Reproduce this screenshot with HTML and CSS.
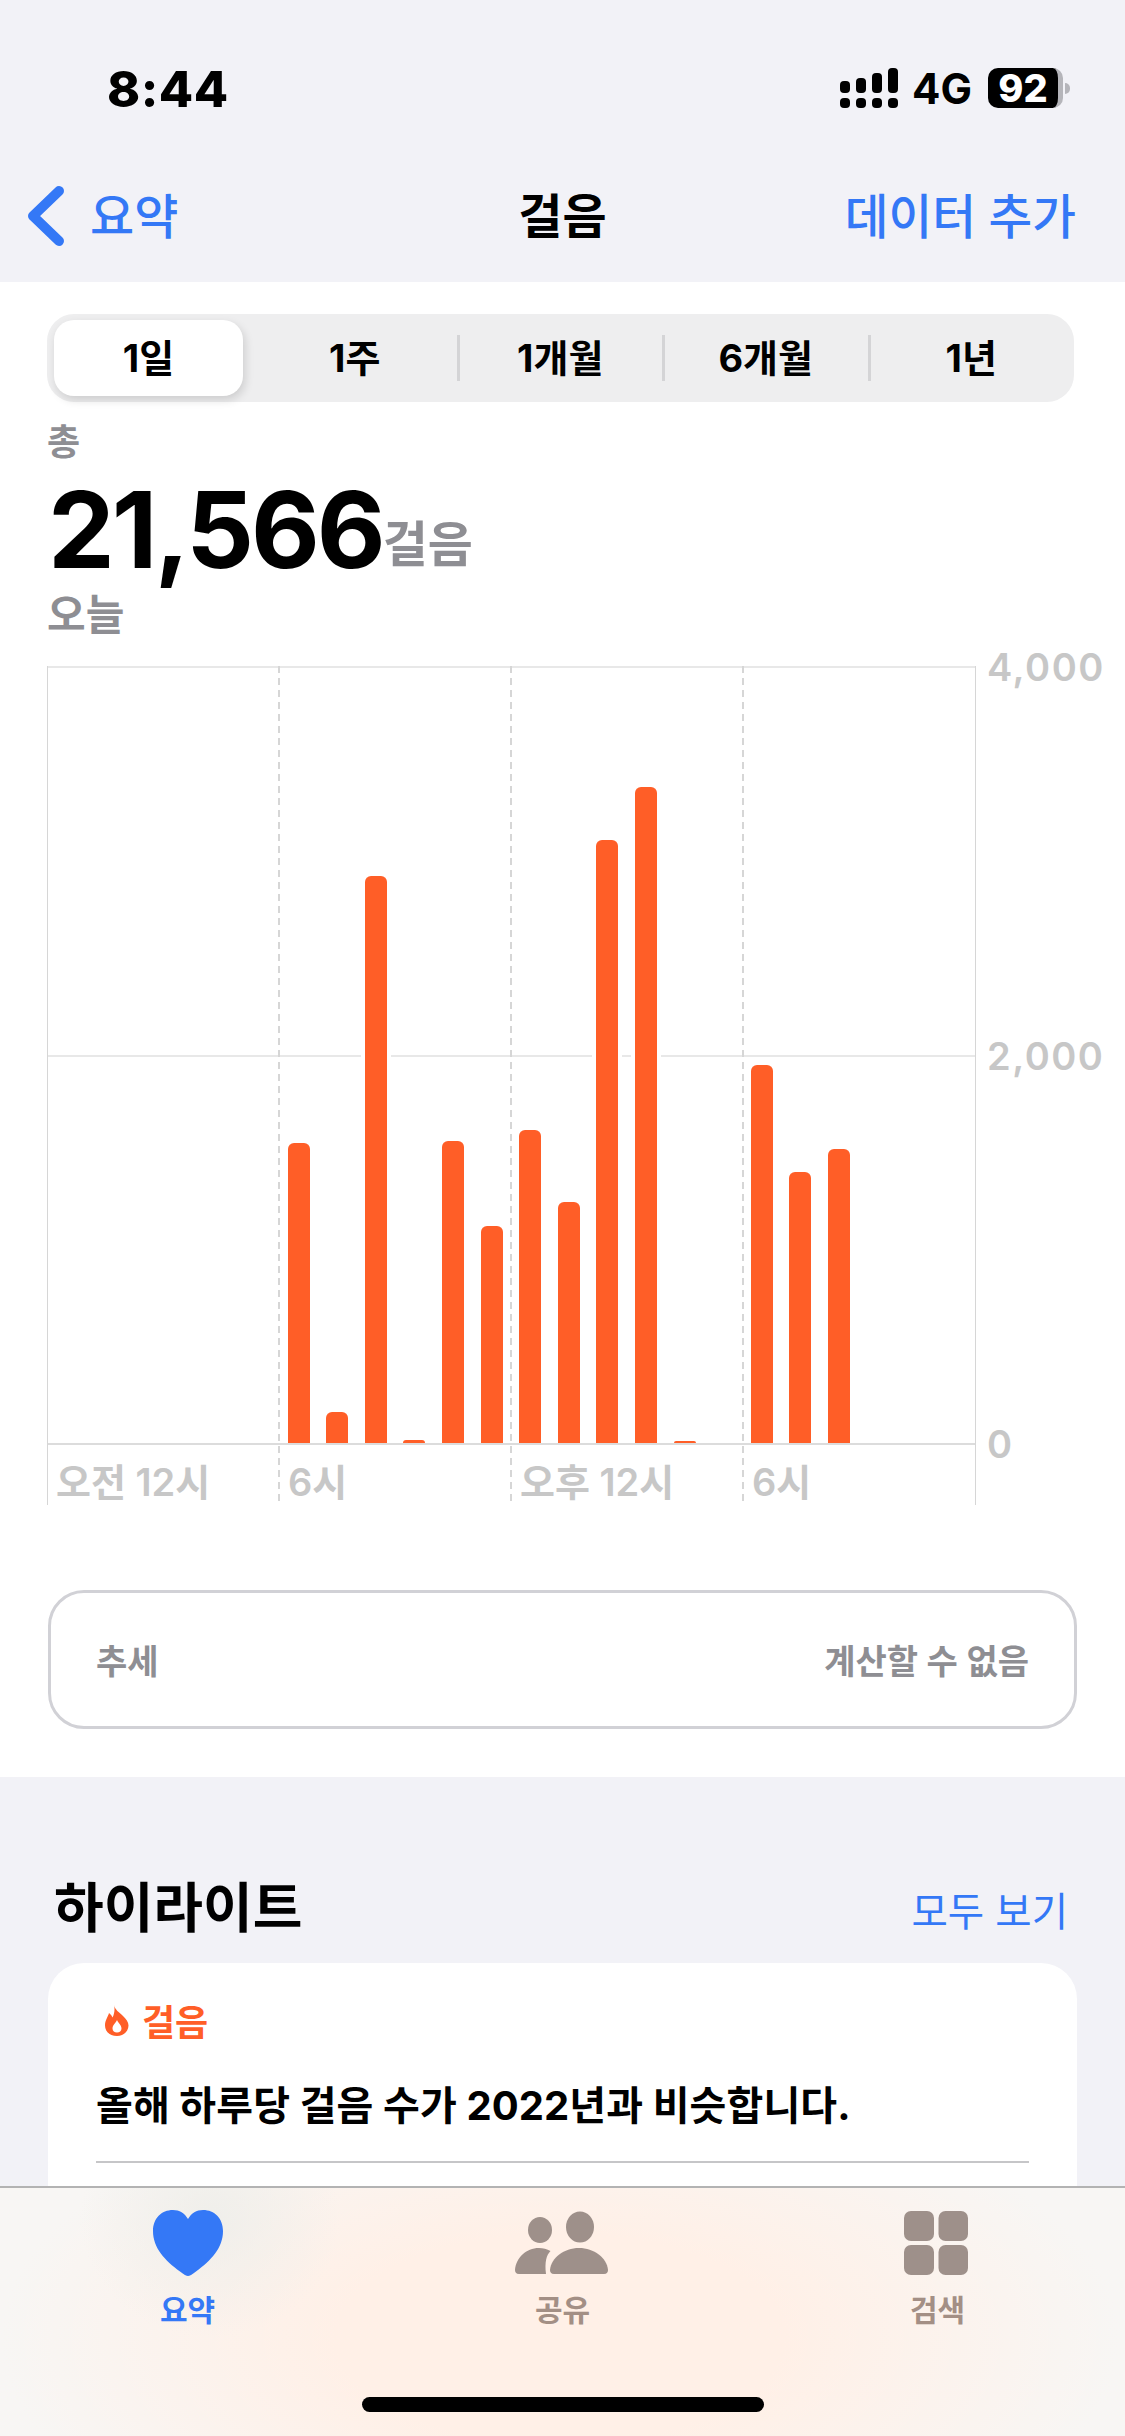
FILE: index.html
```html
<!DOCTYPE html>
<html lang="ko">
  <head>
    <meta charset="UTF-8" />
    <meta name="viewport" content="width=device-width, initial-scale=1.0" />
    <title>걸음</title>
    <link rel="stylesheet" href="styles.css">
  </head>
  <body>
    <header class="topBar">
      <div class="status">
        <span class="time">8:44</span>
        <div class="statusIcons">
          <svg class="signal" width="58" height="40" viewBox="0 0 58 40">
            <rect x="0" y="30" width="10" height="10" rx="4" />
            <rect x="16" y="30" width="10" height="10" rx="4" />
            <rect x="32" y="30" width="10" height="10" rx="4" />
            <rect x="48" y="30" width="10" height="10" rx="4" />
            <rect x="0" y="13" width="10" height="12" rx="4" />
            <rect x="16" y="10" width="10" height="15" rx="4" />
            <rect x="32" y="5" width="10" height="20" rx="4" />
            <rect x="48" y="0" width="10" height="25" rx="4" />
          </svg>
          <span class="network">4G</span>
          <div class="battery">
            <span class="batteryBody">92</span>
            <span class="batteryNub"></span>
          </div>
        </div>
      </div>
      <nav class="navRow">
        <a class="back">
          <svg width="40" height="62" viewBox="0 0 40 62">
            <path d="M33 6 L7 31 L33 56" fill="none" stroke="#3478f6" stroke-width="10" stroke-linecap="round" stroke-linejoin="round" />
          </svg>
          요약
        </a>
        <h1>걸음</h1>
        <a class="addData">데이터 추가</a>
      </nav>
    </header>

    <section class="stepsPanel">
      <div class="segments">
        <button class="selected">1일</button>
        <button>1주</button>
        <button class="divided">1개월</button>
        <button class="divided">6개월</button>
        <button class="divided">1년</button>
      </div>

      <p class="totalLabel">총</p>
      <p class="totalRow"><span class="totalNumber">21,566</span><span class="totalUnit">걸음</span></p>
      <p class="dayLabel">오늘</p>

      <div class="chart">
        <div class="plot">
          <div class="rules">
            <span></span>
            <span></span>
            <span></span>
          </div>
          <div class="dashes">
            <span></span>
            <span></span>
            <span></span>
            <span></span>
          </div>
          <div class="bars">
            <i></i><i></i><i></i><i></i><i></i><i></i>
            <i style="height: 300px"></i>
            <i style="height: 31px"></i>
            <i style="height: 567px"></i>
            <i style="height: 3px"></i>
            <i style="height: 302px"></i>
            <i style="height: 217px"></i>
            <i style="height: 313px"></i>
            <i style="height: 241px"></i>
            <i style="height: 603px"></i>
            <i style="height: 656px"></i>
            <i style="height: 2px"></i>
            <i></i>
            <i style="height: 378px"></i>
            <i style="height: 271px"></i>
            <i style="height: 294px"></i>
            <i></i><i></i><i></i>
          </div>
          <div class="baseline"></div>
          <div class="hours">
            <span>오전 12시</span>
            <span>6시</span>
            <span>오후 12시</span>
            <span>6시</span>
          </div>
        </div>
        <div class="axis">
          <span>4,000</span>
          <span>2,000</span>
          <span>0</span>
        </div>
      </div>

      <div class="trend">
        <span>추세</span>
        <span>계산할 수 없음</span>
      </div>
    </section>

    <section class="highlights">
      <div class="sectionHead">
        <h2>하이라이트</h2>
        <a>모두 보기</a>
      </div>
      <article class="highlightCard">
        <div class="cardTitle">
          <svg width="24" height="31" viewBox="0 0 24 31">
            <path d="M9 0 C10 5 14 7 18 11 C21 14 23.5 17 23.5 20.5 C23.5 26.5 18 31 12 31 C5 31 0 26.5 0 20.5 C0 15 3 12 4 8 C6 9.5 7 11 7.5 12.5 C9.5 9 10 4 9 0 Z" fill="#ff5e27" />
            <path d="M12 15 C13 18 16.5 20 16.5 23.5 C16.5 26 14.5 27.5 12 27.5 C9.5 27.5 7.5 26 7.5 23.5 C7.5 20 11 18 12 15 Z" fill="#fff" />
          </svg>
          걸음
        </div>
        <p class="cardText">올해 하루당 걸음 수가 2022년과 비슷합니다.</p>
        <hr />
      </article>
    </section>

    <footer class="tabBar">
      <div class="tabs">
        <a class="tab active">
          <svg width="70" height="66" viewBox="0 0 70 66">
            <path d="M35 66 C33.5 66 31 64.5 27 61.5 C12 50.5 0 38 0 21 C0 8.5 8.5 0 20 0 C26.5 0 31.5 3 35 9 C38.5 3 43.5 0 50 0 C61.5 0 70 8.5 70 21 C70 38 58 50.5 43 61.5 C39 64.5 36.5 66 35 66 Z" />
          </svg>
          요약
        </a>
        <a class="tab">
          <svg class="peopleIcon" width="94" height="62" viewBox="0 0 94 62">
            <ellipse cx="25" cy="18" rx="12" ry="13" />
            <ellipse cx="65" cy="15" rx="14" ry="15.5" />
            <path d="M39 62 C36 62 35 60 35 58 C36 46 49 36 64 36 C79 36 92 46 93 58 C93 60 92 62 89 62 Z" />
            <path d="M4 62 C1 62 0 60 0 58 C1 46 11 36 24 36 C28 36 32 37 35.5 39 C31.5 43 29.5 50 31 62 Z" />
          </svg>
          공유
        </a>
        <a class="tab">
          <svg class="gridIcon" width="64" height="64" viewBox="0 0 64 64">
            <rect x="0" y="0" width="30" height="30" rx="7" />
            <rect x="34.500" y="0" width="29.500" height="30" rx="7" />
            <rect x="0" y="34" width="30" height="30" rx="7" />
            <rect x="34.500" y="34" width="29.500" height="30" rx="7" />
          </svg>
          검색
        </a>
      </div>
      <div class="homeBar"></div>
    </footer>
  </body>
</html>
```

FILE: styles.css
```css
* {
  box-sizing: border-box;
}

html,
body {
  margin: 0;
  height: 2436px;
  overflow: hidden;
}

body {
  position: relative;
  background-color: #f2f2f7;
  color: #000;
  font-family: Inter, "Noto Sans CJK KR", sans-serif;
}

p,
h1,
h2 {
  margin: 0;
}

/* top bar */
.topBar {
  height: 282px;
  padding-top: 58px;
}

.status {
  display: flex;
  justify-content: space-between;
  align-items: center;
  height: 60px;
  padding: 0 55px 0 107px;
}

.time {
  margin-top: 2px;
  font-size: 50px;
  font-weight: 800;
  letter-spacing: 0.5px;
}

.statusIcons {
  display: flex;
  align-items: center;
}

.network {
  margin-left: 14px;
  font-size: 42px;
  font-weight: 700;
}

.battery {
  display: flex;
  align-items: center;
  margin-left: 16px;
}

.batteryBody {
  width: 75px;
  height: 40px;
  border-right: 5px solid #b5b5ba;
  border-radius: 10px;
  background-color: #000;
  color: #fff;
  font-size: 38px;
  font-weight: 800;
  line-height: 40px;
  text-align: center;
}

.batteryNub {
  width: 5px;
  height: 11px;
  margin-left: 2px;
  border-radius: 0 5px 5px 0;
  background-color: #b5b5ba;
}

.navRow {
  display: grid;
  grid-template-columns: 1fr auto 1fr;
  align-items: center;
  height: 90px;
  margin-top: 50px;
  padding: 0 24px;
  font-size: 48px;
  font-weight: 500;
}

.navRow a {
  color: #3478f6;
}

.back {
  display: flex;
  align-items: center;
  gap: 24px;
}

.back svg {
  margin: 6px 0 0 2px;
}

.navRow h1 {
  font-size: 48px;
  font-weight: 700;
}

.addData {
  padding-right: 25px;
  font-size: 47.500px;
  text-align: right;
}

/* steps */
.stepsPanel {
  height: 1495px;
  padding: 32px 48px 0 47px;
  background-color: #fff;
}

.segments {
  display: flex;
  width: 1027px;
  height: 88px;
  padding: 6px 0;
  border-radius: 27px;
  background-color: #eeeeef;
}

.segments button {
  flex: 1;
  position: relative;
  padding: 0 0 5px;
  border: 0;
  background: none;
  color: #000;
  font-family: inherit;
  font-size: 38px;
  font-weight: 700;
}

.segments .selected {
  flex: none;
  width: 189px;
  margin: 0 9px 0 7px;
  border-radius: 20px;
  background-color: #fff;
  box-shadow: 2px 4px 10px rgba(0, 0, 0, 0.14);
}

.segments .divided::before {
  content: "";
  position: absolute;
  left: -1px;
  top: 15px;
  bottom: 15px;
  width: 3px;
  background-color: #d4d4d6;
}

.totalLabel {
  margin-top: 18px;
  color: #8e8e93;
  font-size: 36px;
  font-weight: 600;
  line-height: 44px;
}

.totalRow {
  height: 107px;
  margin-top: 12px;
  padding-left: 1px;
  line-height: 107px;
  white-space: nowrap;
}

.totalNumber {
  display: inline-block;
  font-size: 106px;
  font-weight: 700;
  letter-spacing: -3px;
}

.totalUnit {
  color: #8e8e93;
  font-size: 49px;
  font-weight: 600;
  vertical-align: 6px;
  line-height: 50px;
}

.dayLabel {
  margin-top: 6px;
  color: #8e8e93;
  font-size: 42px;
  font-weight: 600;
  line-height: 52px;
}

/* chart */
.chart {
  display: flex;
  margin-top: 25px;
}

.plot {
  position: relative;
  width: 929px;
  height: 839px;
  border-left: 1px solid #d6d6d6;
  border-right: 1px solid #d6d6d6;
}

.rules {
  position: absolute;
  inset: 0;
  display: grid;
  grid-template-rows: 389px 388px 1fr;
}

.rules span {
  border-top: 2px solid #e8e8e8;
}

.rules span:last-child {
  border-top: 0;
}

.dashes {
  position: absolute;
  inset: 0 0 0 -2px;
  display: grid;
  grid-template-columns: repeat(4, 232px);
}

.dashes span + span {
  width: 2px;
  background-image: repeating-linear-gradient(to bottom, #d6d6d6 0, #d6d6d6 7px, transparent 7px, transparent 12px);
}

.bars {
  position: relative;
  display: grid;
  grid-template-columns: repeat(24, 38.6px);
  align-items: end;
  height: 777px;
  padding-left: 8px;
}

.bars i {
  display: block;
  width: 22px;
  border-radius: 6px 6px 0 0;
  background-color: #ff5e27;
  box-shadow: 0 0 0 4px #fff;
}

.bars i:not([style]) {
  visibility: hidden;
}

.baseline {
  position: relative;
  height: 2px;
  background-color: #dcdcdc;
}

.hours {
  position: relative;
  display: grid;
  grid-template-columns: repeat(4, 232px);
  padding: 12px 0 0 8px;
  color: #c7c7c7;
  font-size: 38px;
  font-weight: 600;
  line-height: 50px;
}

.axis {
  display: flex;
  flex-direction: column;
  gap: 344.500px;
  margin: -21px 0 0 11px;
  color: #c7c7c7;
  font-size: 38px;
  font-weight: 600;
  line-height: 44px;
  letter-spacing: 1.500px;
}

.trend {
  display: flex;
  justify-content: space-between;
  align-items: center;
  width: 1029px;
  height: 139px;
  margin: 85px 0 0 1px;
  padding: 0 45px;
  border: 3px solid #d1d1d6;
  border-radius: 36px;
  color: #8e8e93;
  font-size: 34px;
  font-weight: 600;
}

/* highlights */
.highlights {
  padding: 96px 48px 0;
}

.sectionHead {
  display: flex;
  justify-content: space-between;
  align-items: center;
  height: 62px;
  padding: 0 9px 0 6px;
}

.sectionHead h2 {
  font-size: 54px;
  font-weight: 600;
}

.sectionHead a {
  margin-top: 8px;
  color: #3478f6;
  font-size: 39.500px;
}

.highlightCard {
  height: 400px;
  margin-top: 28px;
  padding: 35px 48px 0;
  border-radius: 36px;
  background-color: #fff;
}

.cardTitle {
  display: flex;
  align-items: center;
  gap: 13px;
  height: 44px;
  padding-left: 9px;
  color: #ff5e27;
  font-size: 36px;
  font-weight: 600;
}

.cardText {
  margin-top: 36px;
  font-size: 40px;
  font-weight: 700;
  line-height: 56px;
  letter-spacing: 0.1px;
}

.highlightCard hr {
  height: 2px;
  margin: 27px 0 0;
  border: 0;
  background-color: #c6c6c8;
}

/* tab bar */
.tabBar {
  position: absolute;
  left: 0;
  right: 0;
  bottom: 0;
  display: flex;
  flex-direction: column;
  height: 250px;
  border-top: 2px solid #b3b3b3;
  background-color: #f8f6f4;
  background-image:
    radial-gradient(ellipse 130px 120px at 210px 30px, rgba(238, 238, 234, 0.9), transparent),
    radial-gradient(ellipse 560px 260px at 560px 150px, #fff0e7 40%, rgba(255, 240, 231, 0));
}

.tabs {
  display: grid;
  grid-template-columns: repeat(3, 1fr);
  padding-top: 22px;
}

.tab {
  display: flex;
  flex-direction: column;
  align-items: center;
  color: #a38f85;
  font-size: 30px;
  font-weight: 600;
  line-height: 40px;
}

.tab svg {
  height: 66px;
  margin-bottom: 14px;
  fill: #9e908a;
}

.tab .peopleIcon {
  margin-right: 2px;
}

.tab .gridIcon {
  margin-right: 4px;
}

.tab.active {
  color: #3478f6;
}

.tab.active svg {
  fill: #3478f6;
}

.homeBar {
  align-self: center;
  width: 402px;
  height: 15px;
  margin-top: auto;
  margin-bottom: 24px;
  border-radius: 8px;
  background-color: #000;
}
```
